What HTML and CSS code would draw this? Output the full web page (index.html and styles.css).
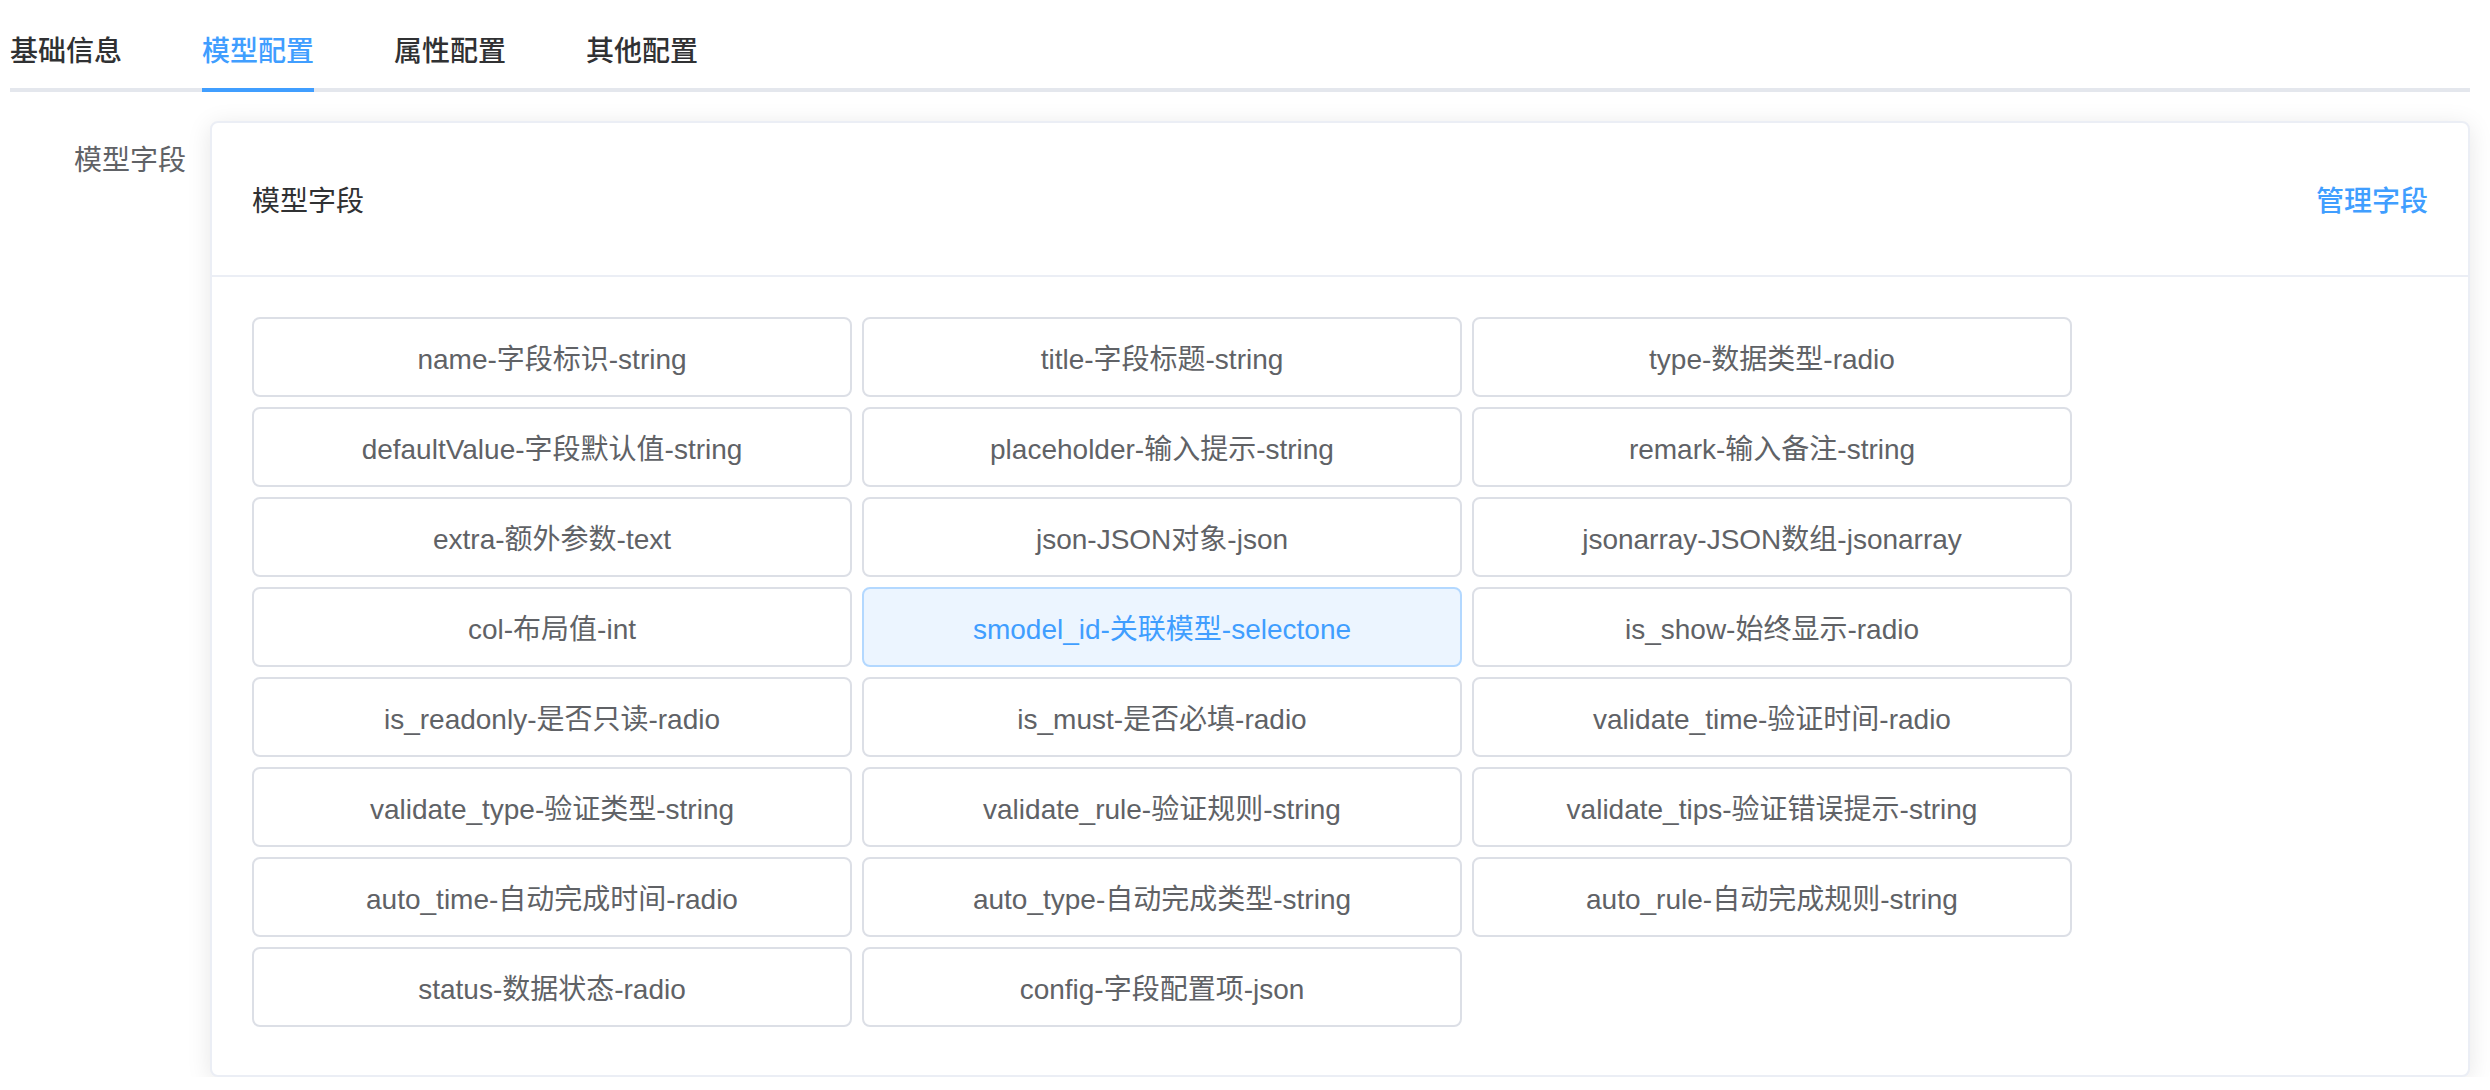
FILE: index.html
```html
<!DOCTYPE html>
<html lang="zh-CN">
<head>
<meta charset="utf-8">
<title>模型配置</title>
<link rel="stylesheet" href="styles.css">
</head>
<body>
<div class="page">
  <div class="tabs">
    <div class="tab">基础信息</div>
    <div class="tab active">模型配置</div>
    <div class="tab">属性配置</div>
    <div class="tab">其他配置</div>
  </div>
  <div class="form-item">
    <div class="label">模型字段</div>
    <div class="content">
      <div class="card">
        <div class="card-header">
          <span class="card-title">模型字段</span>
          <span class="link-btn">管理字段</span>
        </div>
        <div class="card-body">
          <div class="field">name-字段标识-string</div>
          <div class="field">title-字段标题-string</div>
          <div class="field">type-数据类型-radio</div>
          <div class="field">defaultValue-字段默认值-string</div>
          <div class="field">placeholder-输入提示-string</div>
          <div class="field">remark-输入备注-string</div>
          <div class="field">extra-额外参数-text</div>
          <div class="field">json-JSON对象-json</div>
          <div class="field">jsonarray-JSON数组-jsonarray</div>
          <div class="field">col-布局值-int</div>
          <div class="field selected">smodel_id-关联模型-selectone</div>
          <div class="field">is_show-始终显示-radio</div>
          <div class="field">is_readonly-是否只读-radio</div>
          <div class="field">is_must-是否必填-radio</div>
          <div class="field">validate_time-验证时间-radio</div>
          <div class="field">validate_type-验证类型-string</div>
          <div class="field">validate_rule-验证规则-string</div>
          <div class="field">validate_tips-验证错误提示-string</div>
          <div class="field">auto_time-自动完成时间-radio</div>
          <div class="field">auto_type-自动完成类型-string</div>
          <div class="field">auto_rule-自动完成规则-string</div>
          <div class="field">status-数据状态-radio</div>
          <div class="field">config-字段配置项-json</div>
        </div>
      </div>
    </div>
  </div>
</div>
</body>
</html>
```

FILE: styles.css
```css
html, body {
  margin: 0;
  padding: 0;
  background: #ffffff;
}
body {
  font-family: "Liberation Sans", "Noto Sans CJK SC", sans-serif;
  color: #606266;
}
.page {
  padding: 12px 20px 0 10px;
}
.tabs {
  display: flex;
  height: 80px;
  box-shadow: inset 0 -4px 0 #e4e7ed;
  margin-bottom: 29px;
}
.tab {
  height: 80px;
  line-height: 80px;
  padding: 0 40px;
  font-size: 28px;
  font-weight: 500;
  color: #303133;
  position: relative;
}
.tab:first-child {
  padding-left: 0;
}
.tab:last-child {
  padding-right: 0;
}
.tab.active {
  color: #409eff;
}
.tab.active::after {
  content: "";
  position: absolute;
  left: 40px;
  right: 40px;
  bottom: 0;
  height: 4px;
  background: #409eff;
}
.form-item {
  display: flex;
}
.label {
  width: 200px;
  flex: none;
  box-sizing: border-box;
  padding-right: 24px;
  text-align: right;
  font-size: 28px;
  line-height: 80px;
  color: #606266;
}
.content {
  flex: 1;
}
.card {
  border: 2px solid #ebeef5;
  border-radius: 8px;
  background: #fff;
  box-shadow: 0 4px 24px 0 rgba(0, 0, 0, 0.1);
  overflow: hidden;
}
.card-header {
  display: flex;
  align-items: center;
  justify-content: space-between;
  padding: 36px 40px;
  height: 80px;
  border-bottom: 2px solid #ebeef5;
}
.card-title {
  font-size: 28px;
  color: #303133;
}
.link-btn {
  font-size: 28px;
  font-weight: 500;
  color: #409eff;
}
.card-body {
  display: flex;
  flex-wrap: wrap;
  gap: 10px;
  padding: 40px 40px 48px;
  width: 1820px;
}
.field {
  box-sizing: border-box;
  width: 600px;
  height: 80px;
  border: 2px solid #dcdfe6;
  border-radius: 8px;
  display: flex;
  align-items: center;
  justify-content: center;
  font-size: 28px;
  color: #606266;
  background: #fff;
}
.field.selected {
  background: #ecf5ff;
  border-color: #b3d8ff;
  color: #409eff;
}
```
